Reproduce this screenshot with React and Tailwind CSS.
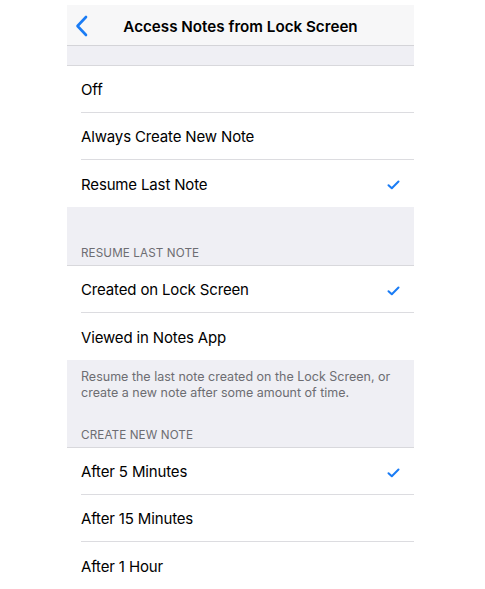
import React from "react";

const font = { fontFamily: "Inter, 'Noto Sans', 'Liberation Sans', sans-serif" };

function Check() {
  return (
    <svg width="13" height="10" viewBox="0 0 13 10" className="shrink-0">
      <path d="M1.5 5.2 L4.8 8.3 L11.5 1.5" fill="none" stroke="#1a7cf5" strokeWidth="2" strokeLinecap="round" strokeLinejoin="round" />
    </svg>
  );
}

function Row({ label, checked, last }) {
  return (
    <div className="h-[47px] bg-white pl-[14px] flex">
      <div className={"flex-1 flex items-center justify-between pr-[14px] pt-[3px] " + (last ? "" : "border-b border-[#dcdce0]")}>
        <span className="text-[15px] text-black tracking-[-0.15px]">{label}</span>
        {checked ? <Check /> : null}
      </div>
    </div>
  );
}

export default function App() {
  return (
    <div className="min-h-[589px] bg-white pt-[5px]" style={font}>
      <div className="ml-[67px] w-[347px] bg-[#efeff4]">
        <div className="h-[41px] bg-[#f7f7f8] border-b border-[#d4d4d8] flex items-center relative">
          <svg width="14" height="22" viewBox="0 0 14 22" className="ml-[8px] mt-[1px]">
            <path d="M11 2 L2.5 11 L11 20" fill="none" stroke="#1a7cf5" strokeWidth="2.6" strokeLinecap="round" strokeLinejoin="round" />
          </svg>
          <div className="absolute inset-0 flex items-center justify-center pt-[5px]">
            <span className="text-[15.2px] font-semibold text-black">Access Notes from Lock Screen</span>
          </div>
        </div>
        <div className="h-[20px] border-b border-[#d8d8dc]" />
        <div>
          <Row label="Off" />
          <Row label="Always Create New Note" />
          <Row label="Resume Last Note" checked last />
        </div>
        <div className="h-[59px] pl-[14px] flex items-end pb-[2px] border-b border-[#d8d8dc]">
          <span className="text-[11.7px] text-[#6d6d72] tracking-[0.1px]">RESUME LAST NOTE</span>
        </div>
        <div>
          <Row label="Created on Lock Screen" checked />
          <Row label="Viewed in Notes App" last />
        </div>
        <div className="h-[88px] pl-[14px] pr-[10px] border-b border-[#d8d8dc] flex flex-col">
          <p className="text-[12.5px] leading-[16px] text-[#6d6d72] mt-[9px]">
            Resume the last note created on the Lock Screen, or create a new note after some amount of time.
          </p>
          <span className="text-[11.7px] text-[#6d6d72] mt-auto pb-[2px] tracking-[0.1px]">CREATE NEW NOTE</span>
        </div>
        <div>
          <Row label="After 5 Minutes" checked />
          <Row label="After 15 Minutes" />
          <Row label="After 1 Hour" last />
        </div>
      </div>
    </div>
  );
}
